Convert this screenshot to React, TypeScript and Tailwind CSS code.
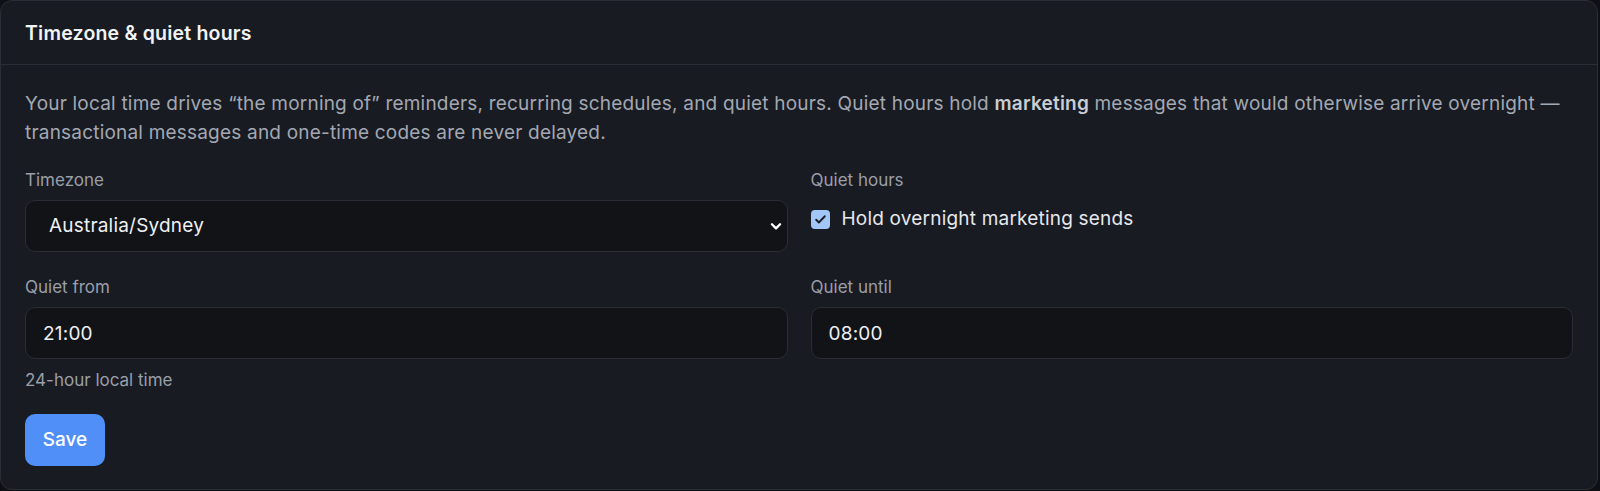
import React, { useState } from 'react';

const font = { fontFamily: 'Inter, "Noto Sans", sans-serif' };

const Field: React.FC<{ label: string; children: React.ReactNode; hint?: string }> = ({ label, children, hint }) => (
  <div className="flex flex-col">
    <label className="text-[17px] leading-5 text-[#9a9fa9] mb-[10px]">{label}</label>
    {children}
    {hint && <p className="text-[17px] leading-5 text-[#9a9fa9] mt-[11px]">{hint}</p>}
  </div>
);

export default function App() {
  const [hold, setHold] = useState(true);
  const [tz, setTz] = useState('Australia/Sydney');
  const [from, setFrom] = useState('21:00');
  const [until, setUntil] = useState('08:00');

  return (
    <div className="min-h-screen bg-[#0e1014]" style={font}>
      <section className="w-[1598px] h-[490px] bg-[#181b22] border border-[#2a2e37] rounded-[12px] flex flex-col">
        <header className="h-[64px] flex items-center px-[24px] pt-[2px] border-b border-[#2a2e37]">
          <h2 className="text-[19.5px] tracking-[0.2px] font-semibold text-[#f1f3f6]">Timezone &amp; quiet hours</h2>
        </header>

        <div className="px-[24px] pt-[24px] flex flex-col">
          <p className="text-[19px] tracking-[0.2px] leading-[29px] text-[#a3a8b2]">
            Your local time drives “the morning of” reminders, recurring schedules, and quiet hours. Quiet hours hold{' '}
            <strong className="font-semibold text-[#c9cdd4]">marketing</strong> messages that would otherwise arrive overnight —
            transactional messages and one-time codes are never delayed.
          </p>

          <div className="grid grid-cols-2 gap-x-[23px] gap-y-[25px] mt-[23px]">
            <Field label="Timezone">
              <div className="relative">
                <select
                  value={tz}
                  onChange={(e) => setTz(e.target.value)}
                  className="appearance-none w-full h-[52px] rounded-[10px] bg-[#111317] border border-[#2a2d35] pl-[23px] pr-10 text-[19px] tracking-[0.2px] text-[#eef0f3] outline-none"
                >
                  <option>Australia/Sydney</option>
                  <option>Europe/London</option>
                  <option>America/New_York</option>
                </select>
                <svg className="pointer-events-none absolute right-[5px] top-1/2 -translate-y-1/2" width="14" height="14" viewBox="0 0 24 24" fill="none" stroke="#ffffff" strokeWidth="4" strokeLinecap="round" strokeLinejoin="round">
                  <path d="M5 9l7 7 7-7" />
                </svg>
              </div>
            </Field>

            <div className="flex flex-col">
              <span className="text-[17px] leading-5 text-[#9a9fa9] mb-[15px]">Quiet hours</span>
              <label className="flex items-center gap-[12px] cursor-pointer">
                <button
                  type="button"
                  onClick={() => setHold(!hold)}
                  className={`w-[19px] h-[19px] rounded-[4px] flex items-center justify-center ${hold ? 'bg-[#a3c6f8]' : 'bg-[#111317] border border-[#4a4f59]'}`}
                >
                  {hold && (
                    <svg width="13" height="13" viewBox="0 0 24 24" fill="none" stroke="#1b1e25" strokeWidth="3.5" strokeLinecap="round" strokeLinejoin="round">
                      <path d="M4 12.5l5 5L20 6" />
                    </svg>
                  )}
                </button>
                <span className="text-[19px] tracking-[0.2px] text-[#e6e8ec]">Hold overnight marketing sends</span>
              </label>
            </div>

            <Field label="Quiet from" hint="24-hour local time">
              <input
                value={from}
                onChange={(e) => setFrom(e.target.value)}
                className="w-full h-[52px] rounded-[10px] bg-[#111317] border border-[#2a2d35] px-[17px] text-[19px] tracking-[0.2px] text-[#eef0f3] outline-none"
              />
            </Field>

            <Field label="Quiet until">
              <input
                value={until}
                onChange={(e) => setUntil(e.target.value)}
                className="w-full h-[52px] rounded-[10px] bg-[#111317] border border-[#2a2d35] px-[17px] text-[19px] tracking-[0.2px] text-[#eef0f3] outline-none"
              />
            </Field>
          </div>

          <div className="mt-[24px]">
            <button className="w-[80px] h-[52px] rounded-[10px] bg-[#4f8ff7] text-[19px] font-medium text-white">Save</button>
          </div>
        </div>
      </section>
    </div>
  );
}
